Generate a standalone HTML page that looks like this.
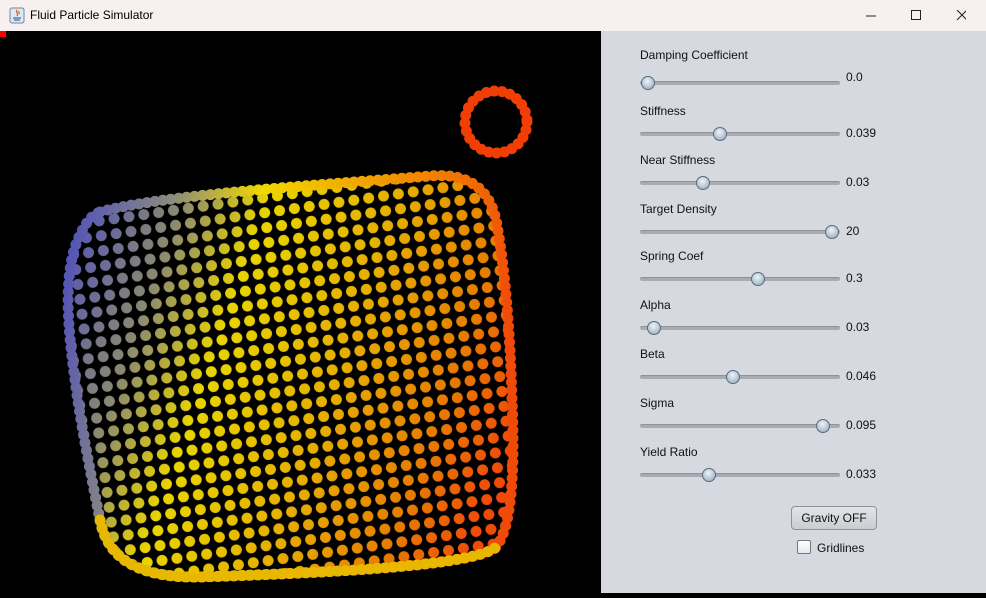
<!DOCTYPE html>
<html><head><meta charset="utf-8"><style>
*{margin:0;padding:0;box-sizing:border-box}
body{width:986px;height:593px;overflow:hidden;font-family:"Liberation Sans",sans-serif;background:#000;position:relative}
#title{position:absolute;left:0;top:0;width:986px;height:31px;background:#f7f0ef;font-size:12px;color:#000}
#title .t{position:absolute;left:30px;top:8px}
#canvas{position:absolute;left:0;top:31px;width:601px;height:562px;background:#000}
#panel{position:absolute;left:601px;top:31px;width:385px;height:562px;background:#d6d9e0}
.lbl{position:absolute;left:39px;font-size:12px;color:#111}
.trk{position:absolute;left:39px;width:200px;height:4px;border-radius:2px;background:#a8acb2;border-top:1px solid #8f9399}
.th{position:absolute;width:14px;height:14px;border-radius:50%;border:1px solid #5b6a78;background:radial-gradient(circle at 45% 35%,#eef3f8,#a9bccd 70%,#8ea4b8)}
.val{position:absolute;left:245px;font-size:12px;color:#111}
#btn{position:absolute;left:190px;top:475px;width:86px;height:24px;border:1px solid #8e949b;border-radius:4px;background:linear-gradient(#e3e5e8,#c9ccd1);font-size:12px;text-align:center;line-height:22px;color:#111}
#cb{position:absolute;left:196px;top:509px;width:14px;height:14px;border:1px solid #777;border-radius:2px;background:linear-gradient(#fff,#e6e8eb)}
#cbl{position:absolute;left:216px;top:510px;font-size:12px;color:#111}
</style></head><body>
<div id="title">
<svg style="position:absolute;left:9px;top:7px" width="16" height="17" viewBox="0 0 16 17"><rect x="1" y="1" width="14" height="15" rx="2" fill="#dfe8f2" stroke="#6b87a6"/><path d="M8 3c-2 2 2 3 0 6M10 4c-1 1 1 2 0 3" stroke="#e25a20" fill="none" stroke-width="1.2"/><path d="M4 11h8M5 13h6" stroke="#3a6ea5" stroke-width="1.3"/></svg>
<span class="t">Fluid Particle Simulator</span>
<svg style="position:absolute;left:866px;top:10px" width="100" height="12"><path d="M0 6h10" stroke="#222"/><rect x="45.5" y="0.5" width="9" height="9" fill="none" stroke="#222"/><path d="M91 0l10 10M101 0l-10 10" stroke="#222" stroke-width="1.1"/></svg>
</div>
<div id="canvas">
<svg width="601" height="562" viewBox="0 31 601 562">
<defs>
<pattern id="dots" width="15" height="15" patternUnits="userSpaceOnUse" patternTransform="rotate(-8)">
<circle cx="7.5" cy="7.5" r="5.5" fill="#fff"/></pattern>
<mask id="m"><rect x="0" y="31" width="601" height="562" fill="url(#dots)"/></mask>
<linearGradient id="g" gradientUnits="userSpaceOnUse" x1="70" y1="260" x2="520" y2="420">
<stop offset="0" stop-color="#5a5ab0"/><stop offset="0.18" stop-color="#8a8a70"/><stop offset="0.35" stop-color="#e8d400"/><stop offset="0.6" stop-color="#e6b000"/><stop offset="0.82" stop-color="#e68000"/><stop offset="1" stop-color="#f04a08"/></linearGradient>
<linearGradient id="g2" gradientUnits="userSpaceOnUse" x1="70" y1="250" x2="510" y2="330">
<stop offset="0" stop-color="#5555b5"/><stop offset="0.2" stop-color="#8a8a80"/><stop offset="0.4" stop-color="#f0d800"/><stop offset="0.7" stop-color="#f09000"/><stop offset="1" stop-color="#f04a08"/></linearGradient>
<clipPath id="c"><path d="M100 212 C160 195 320 185 430 176 C475 172 492 195 497 225 C505 270 510 330 512 400 C515 470 512 530 495 548 C470 565 350 572 200 577 C140 578 108 560 100 520 C90 470 80 420 75 380 C68 330 62 270 80 235 C86 222 92 215 100 212Z"/></clipPath>
</defs>
<rect x="0" y="31" width="6" height="6" fill="#f00"/>
<g clip-path="url(#c)"><rect x="0" y="31" width="601" height="562" fill="url(#g)" mask="url(#m)"/></g>
<path d="M100 212 C160 195 320 185 430 176 C475 172 492 195 497 225 C505 270 510 330 512 400 C515 470 512 530 495 548 C470 565 350 572 200 577 C140 578 108 560 100 520 C90 470 80 420 75 380 C68 330 62 270 80 235 C86 222 92 215 100 212Z" fill="none" stroke="url(#g2)" stroke-width="11" stroke-linecap="round" stroke-dasharray="0 8"/>
<path d="M100 520 C108 560 140 578 200 577 C350 572 470 565 495 548" fill="none" stroke="#e8b800" stroke-width="11" stroke-linecap="round" stroke-dasharray="0 8"/>
<circle cx="496" cy="122" r="31" fill="none" stroke="#f03e05" stroke-width="11" stroke-linecap="round" stroke-dasharray="0 8"/>
</svg>
</div>
<div id="panel">
<div class="lbl" style="top:17px">Damping Coefficient</div><div class="trk" style="top:50px"></div><div class="th" style="left:40px;top:45px"></div><div class="val" style="top:39px">0.0</div>
<div class="lbl" style="top:73px">Stiffness</div><div class="trk" style="top:101px"></div><div class="th" style="left:112px;top:96px"></div><div class="val" style="top:95px">0.039</div>
<div class="lbl" style="top:122px">Near Stiffness</div><div class="trk" style="top:150px"></div><div class="th" style="left:95px;top:145px"></div><div class="val" style="top:144px">0.03</div>
<div class="lbl" style="top:171px">Target Density</div><div class="trk" style="top:199px"></div><div class="th" style="left:224px;top:194px"></div><div class="val" style="top:193px">20</div>
<div class="lbl" style="top:218px">Spring Coef</div><div class="trk" style="top:246px"></div><div class="th" style="left:150px;top:241px"></div><div class="val" style="top:240px">0.3</div>
<div class="lbl" style="top:267px">Alpha</div><div class="trk" style="top:295px"></div><div class="th" style="left:46px;top:290px"></div><div class="val" style="top:289px">0.03</div>
<div class="lbl" style="top:316px">Beta</div><div class="trk" style="top:344px"></div><div class="th" style="left:125px;top:339px"></div><div class="val" style="top:338px">0.046</div>
<div class="lbl" style="top:365px">Sigma</div><div class="trk" style="top:393px"></div><div class="th" style="left:215px;top:388px"></div><div class="val" style="top:387px">0.095</div>
<div class="lbl" style="top:414px">Yield Ratio</div><div class="trk" style="top:442px"></div><div class="th" style="left:101px;top:437px"></div><div class="val" style="top:436px">0.033</div>
<div id="btn">Gravity OFF</div>
<div id="cb"></div><div id="cbl">Gridlines</div>
</div>
</body></html>
